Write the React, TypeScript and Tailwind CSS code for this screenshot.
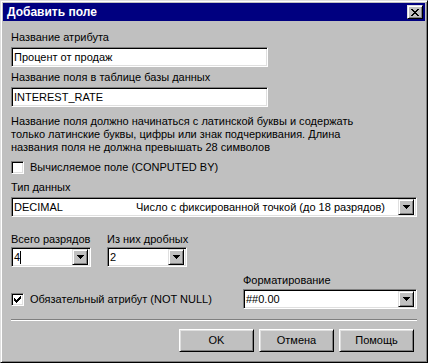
import React from "react";

const sunken =
  "border border-t-[#808080] border-l-[#808080] border-b-white border-r-white shadow-[inset_1px_1px_0_0_#000,inset_-1px_-1px_0_0_#dfdfdf]";
const raised =
  "border border-t-white border-l-white border-b-black border-r-black shadow-[inset_1px_1px_0_0_#dfdfdf,inset_-1px_-1px_0_0_#808080]";
const raisedSmall =
  "border border-t-[#dfdfdf] border-l-[#dfdfdf] border-b-black border-r-black shadow-[inset_1px_1px_0_0_#fff,inset_-1px_-1px_0_0_#808080]";

function Arrow() {
  return (
    <div className={`${raisedSmall} w-[16px] h-[16px] bg-[#c0c0c0] flex items-center justify-center shrink-0`}>
      <svg width="7" height="4" viewBox="0 0 7 4" shapeRendering="crispEdges">
        <path d="M0 0h7v1H0zM1 1h5v1H1zM2 2h3v1H2zM3 3h1v1H3z" fill="#000" />
      </svg>
    </div>
  );
}

function Check({ checked }: { checked?: boolean }) {
  return (
    <div className={`${sunken} w-[13px] h-[13px] bg-white flex items-center justify-center shrink-0`}>
      {checked && (
        <svg width="7" height="7" viewBox="0 0 7 7" shapeRendering="crispEdges">
          <path d="M6 0h1v3H6zM5 1h1v3H5zM4 2h1v3H4zM3 3h1v3H3zM2 4h1v3H2zM1 3h1v3H1zM0 2h1v3H0z" fill="#000" />
        </svg>
      )}
    </div>
  );
}

export default function App() {
  return (
    <div
      className="w-[428px] h-[363px] bg-[#c0c0c0] border border-t-[#dfdfdf] border-l-[#dfdfdf] border-b-black border-r-black shadow-[inset_1px_1px_0_0_#fff,inset_-1px_-1px_0_0_#808080] p-[2px] flex flex-col text-[11px] leading-[13px] text-black"
      style={{ fontFamily: '"Liberation Sans", Arial, sans-serif' }}
    >
      {/* Title bar */}
      <div className="h-[18px] bg-[#000080] flex items-center justify-between pl-[4px] pr-[2px] shrink-0">
        <span className="text-white font-bold text-[12px]">Добавить поле</span>
        <div className={`${raisedSmall} w-[16px] h-[14px] bg-[#c0c0c0] flex items-center justify-center`}>
          <svg width="8" height="7" viewBox="0 0 8 7" shapeRendering="crispEdges">
            <path
              d="M0 0h2v1H0zM6 0h2v1H6zM1 1h2v1H1zM5 1h2v1H5zM2 2h4v1H2zM3 3h2v1H3zM2 4h4v1H2zM1 5h2v1H1zM5 5h2v1H5zM0 6h2v1H0zM6 6h2v1H6z"
              fill="#000"
            />
          </svg>
        </div>
      </div>

      {/* Body */}
      <div className="flex flex-col pl-[8px] pr-[8px]">
        <div className="mt-[10px] h-[13px]">Название атрибута</div>
        <div className={`${sunken} mt-[3px] w-[257px] h-[20px] bg-white pl-[2px] flex items-center`}>
          Процент от продаж
        </div>

        <div className="mt-[4px] h-[13px]">Название поля в таблице базы данных</div>
        <div className={`${sunken} mt-[3px] w-[257px] h-[20px] bg-white pl-[2px] flex items-center`}>
          INTEREST_RATE
        </div>

        <div className="mt-[8px] whitespace-nowrap">
          Название поля должно начинаться с латинской буквы и содержать
          <br />
          только латинские буквы, цифры или знак подчеркивания. Длина
          <br />
          названия поля не должна превышать 28 символов
        </div>

        <div className="mt-[7px] h-[13px] flex items-center gap-[6px]">
          <Check />
          <span>Вычисляемое поле (CONPUTED BY)</span>
        </div>

        <div className="mt-[7px] h-[13px]">Тип данных</div>
        <div className={`${sunken} mt-[3px] h-[20px] bg-white pl-[2px] pr-[2px] flex items-center`}>
          <span className="w-[122px]">DECIMAL</span>
          <span className="flex-1">Число с фиксированной точкой (до 18 разрядов)</span>
          <Arrow />
        </div>

        <div className="mt-[16px] flex gap-[16px]">
          <div className="flex flex-col w-[80px]">
            <div className="h-[13px] whitespace-nowrap">Всего разрядов</div>
            <div className={`${sunken} mt-[1px] h-[20px] bg-white pl-[2px] pr-[2px] flex items-center`}>
              <span className="flex-1 flex items-center">
                4<span className="inline-block w-[1px] h-[13px] bg-black" />
              </span>
              <Arrow />
            </div>
          </div>
          <div className="flex flex-col w-[80px]">
            <div className="h-[13px] whitespace-nowrap">Из них дробных</div>
            <div className={`${sunken} mt-[1px] h-[20px] bg-white pl-[2px] pr-[2px] flex items-center`}>
              <span className="flex-1">2</span>
              <Arrow />
            </div>
          </div>
        </div>

        <div className="mt-[7px] flex">
          <div className="w-[232px] flex items-end">
            <div className="h-[20px] flex items-center gap-[6px]">
              <Check checked />
              <span>Обязательный атрибут (NOT NULL)</span>
            </div>
          </div>
          <div className="flex-1 flex flex-col">
            <div className="h-[13px]">Форматирование</div>
            <div className={`${sunken} mt-[2px] h-[20px] bg-white pl-[2px] pr-[2px] flex items-center`}>
              <span className="flex-1">##0.00</span>
              <Arrow />
            </div>
          </div>
        </div>

        <div className="mt-[10px] h-[2px] border-t border-t-[#808080] border-b border-b-white" />

        <div className="mt-[8px] flex justify-end gap-[5px] pr-[3px]">
          <div className={`${raised} w-[75px] h-[23px] flex items-center justify-center`}>OK</div>
          <div className={`${raised} w-[75px] h-[23px] flex items-center justify-center`}>Отмена</div>
          <div className={`${raised} w-[75px] h-[23px] flex items-center justify-center`}>Помощь</div>
        </div>
      </div>
    </div>
  );
}
